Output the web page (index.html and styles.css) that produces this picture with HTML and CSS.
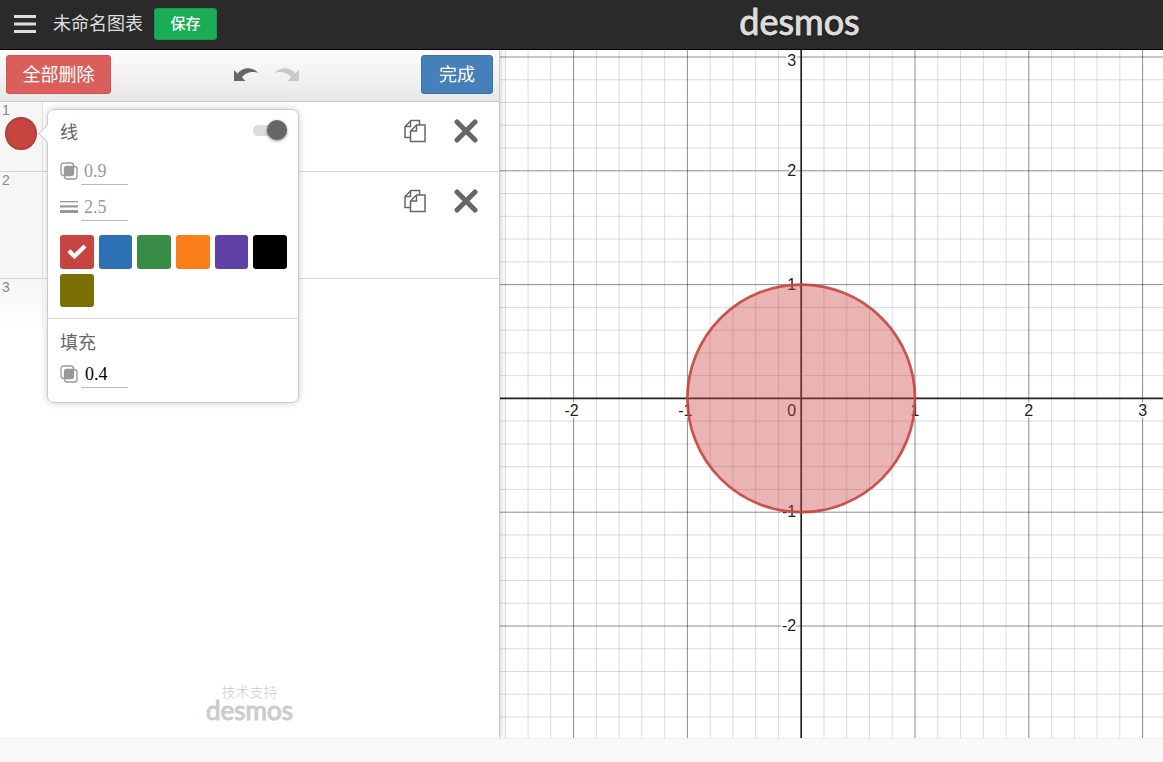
FILE: index.html
```html
<!DOCTYPE html>
<html lang="zh-CN">
<head>
  <meta charset="UTF-8">
  <meta name="viewport" content="width=device-width, initial-scale=1.0">
  <title>Desmos</title>
  <link rel="stylesheet" href="styles.css">
</head>
<body>
  <header class="header">
    <div class="header-left">
      <button type="button" class="menu-button" aria-label="菜单">
        <svg width="22" height="18" viewBox="0 0 22 18"><path d="M0 1.5h22M0 9h22M0 16.5h22" stroke="#ddd" stroke-width="3"/></svg>
      </button>
      <h1 class="title">未命名图表</h1>
      <button type="button" class="btn btn-save">保存</button>
    </div>
    <a href="#" class="logo">desmos</a>
  </header>

  <main class="main">
    <section class="panel">
      <div class="toolbar">
        <button type="button" class="btn btn-delete">全部删除</button>
        <div class="history">
          <button type="button" class="icon-button" aria-label="撤销">
            <svg width="24" height="13" viewBox="0 0 24 13"><path d="M0 2V13H11.5L8 9.5C11 5 17 2.5 24 4.8C19-1.5 9-1.5 3.5 5.5Z" fill="#666"/></svg>
          </button>
          <button type="button" class="icon-button" aria-label="重做" disabled>
            <svg width="24" height="13" viewBox="0 0 24 13"><path d="M24 2V13H12.5L16 9.5C13 5 7 2.5 0 4.8C5-1.5 15-1.5 20.5 5.5Z" fill="#c8c8c8"/></svg>
          </button>
        </div>
        <button type="button" class="btn btn-done">完成</button>
      </div>

      <ol class="expressions">
        <li class="row">
          <div class="gutter">
            <span class="number">1</span>
            <button type="button" class="color-button" aria-label="颜色"></button>
          </div>
          <div class="actions">
            <button type="button" class="icon-button" aria-label="复制">
              <svg width="22" height="24" viewBox="0 0 22 24" fill="none" stroke="#666" stroke-width="1.5"><path d="M6 18.5H1V7.5L7 1.5H15.5V6M1 7.5H6.5V1.5"/><path d="M6.5 22.5V12L12.5 6H21V22.5ZM6.5 12H12.5V6"/></svg>
            </button>
            <button type="button" class="icon-button" aria-label="删除">
              <svg width="24" height="24" viewBox="0 0 24 24"><path d="M3 3L21 21M21 3L3 21" stroke="#666" stroke-width="5"  stroke-linecap="round"/></svg>
            </button>
          </div>
        </li>
        <li class="row row-tall">
          <div class="gutter"><span class="number">2</span></div>
          <div class="actions">
            <button type="button" class="icon-button" aria-label="复制">
              <svg width="22" height="24" viewBox="0 0 22 24" fill="none" stroke="#666" stroke-width="1.5"><path d="M6 18.5H1V7.5L7 1.5H15.5V6M1 7.5H6.5V1.5"/><path d="M6.5 22.5V12L12.5 6H21V22.5ZM6.5 12H12.5V6"/></svg>
            </button>
            <button type="button" class="icon-button" aria-label="删除">
              <svg width="24" height="24" viewBox="0 0 24 24"><path d="M3 3L21 21M21 3L3 21" stroke="#666" stroke-width="5" stroke-linecap="round"/></svg>
            </button>
          </div>
        </li>
        <li class="row row-new">
          <div class="gutter"><span class="number">3</span></div>
        </li>
      </ol>

      <div class="popover">
        <div class="group">
          <div class="group-head">
            <label for="line-on">线</label>
            <input type="checkbox" id="line-on" class="toggle" checked>
          </div>
          <div class="field">
            <label for="line-opacity" aria-label="线不透明度">
              <svg width="18" height="18" viewBox="0 0 18 18"><rect x="1" y="1" width="12.5" height="12.5" rx="2.5" fill="none" stroke="#999" stroke-width="1.3"/><rect x="4.5" y="4.5" width="12.5" height="12.5" rx="2.5" fill="none" stroke="#999" stroke-width="1.3"/><rect x="4.5" y="4.5" width="9" height="9" rx="2" fill="#999"/></svg>
            </label>
            <input type="text" id="line-opacity" value="0.9">
          </div>
          <div class="field">
            <label for="line-width" aria-label="线宽">
              <svg width="18" height="18" viewBox="0 0 18 18" fill="#999"><rect y="3" width="18" height="1.3"/><rect y="7.3" width="18" height="2.2"/><rect y="12" width="18" height="3"/></svg>
            </label>
            <input type="text" id="line-width" value="2.5">
          </div>
          <div class="swatches">
            <button type="button" class="swatch red" aria-label="红色">
              <svg width="20" height="16" viewBox="0 0 20 16"><path d="M1.8 6.8L7.5 12.3L18 2" fill="none" stroke="#fff" stroke-width="4.2"/></svg>
            </button>
            <button type="button" class="swatch blue" aria-label="蓝色"></button>
            <button type="button" class="swatch green" aria-label="绿色"></button>
            <button type="button" class="swatch orange" aria-label="橙色"></button>
            <button type="button" class="swatch purple" aria-label="紫色"></button>
            <button type="button" class="swatch black" aria-label="黑色"></button>
            <button type="button" class="swatch olive" aria-label="橄榄色"></button>
          </div>
        </div>
        <div class="group">
          <div class="group-head"><span>填充</span></div>
          <div class="field field-active">
            <label for="fill-opacity" aria-label="填充不透明度">
              <svg width="18" height="18" viewBox="0 0 18 18"><rect x="1" y="1" width="12.5" height="12.5" rx="2.5" fill="none" stroke="#999" stroke-width="1.3"/><rect x="4.5" y="4.5" width="12.5" height="12.5" rx="2.5" fill="none" stroke="#999" stroke-width="1.3"/><rect x="4.5" y="4.5" width="9" height="9" rx="2" fill="#999"/></svg>
            </label>
            <input type="text" id="fill-opacity" value="0.4">
          </div>
        </div>
      </div>

      <div class="powered">
        <span>技术支持</span>
        <a href="#" class="powered-logo">desmos</a>
      </div>
    </section>

    <section class="graph">
      <svg id="graph" class="graph-svg"></svg>
    </section>
  </main>

  <footer class="footer"></footer>

  <script src="script.js"></script>
</body>
</html>
```
FILE: styles.css
```css
* {
  box-sizing: border-box;
}
body {
  display: flex;
  flex-direction: column;
  min-height: 100vh;
  margin: 0;
  background: #fff;
  font-family: "Liberation Sans", "Noto Sans CJK SC", sans-serif;
}
button {
  padding: 0;
  border: none;
  background: none;
  font-family: inherit;
  cursor: pointer;
}
svg {
  display: block;
}

/* header */
.header {
  display: grid;
  grid-template-columns: 436px 1fr;
  align-items: center;
  height: 50px;
  padding-bottom: 2px;
  background: #2a2a2a;
  border-bottom: 1px solid #000;
}
.header-left {
  display: flex;
  align-items: center;
  padding-left: 14px;
}
.title {
  margin: 0 11px 0 17px;
  color: #ddd;
  font-size: 18px;
  font-weight: 400;
  line-height: 24px;
}
.btn {
  padding-bottom: 3px;
  border-radius: 3px;
  color: #fff;
  font-size: 18px;
}
.btn-save {
  width: 63px;
  height: 32px;
  background: #1aad58;
  border: 1px solid #18994e;
  font-size: 15px;
  font-weight: 500;
}
.logo {
  padding-bottom: 5px;
  color: #ddd;
  font-family: Lato, sans-serif;
  font-size: 36px;
  line-height: 40px;
  text-align: center;
  text-decoration: none;
  text-shadow: 0 1px 2px #000;
  -webkit-text-stroke: 1px #ddd;
}

/* expression panel */
.main {
  display: grid;
  grid-template-columns: 500px 1fr;
  flex: 1;
}
.panel {
  position: relative;
  z-index: 1;
  display: flex;
  flex-direction: column;
  background: #fff;
  border-right: 1px solid #ccc;
  box-shadow: 0 0 6px rgba(0, 0, 0, 0.25);
  clip-path: inset(0 -10px 0 0);
}
.toolbar {
  display: flex;
  align-items: center;
  justify-content: space-between;
  height: 52px;
  padding: 0 6px 2px;
  background: linear-gradient(#fcfcfc, #e8e8e8);
  border-bottom: 1px solid #c8c8c8;
}
.btn-delete {
  width: 105px;
  height: 39px;
  background: #da5f5b;
  border: 1px solid #d05550;
}
.btn-done {
  width: 72px;
  height: 39px;
  background: #4680b9;
  border: 1px solid #3b72a8;
}
.history {
  display: flex;
  gap: 17px;
}
.expressions {
  margin: 0;
  padding: 0;
  list-style: none;
}
.row {
  display: flex;
  justify-content: space-between;
  height: 70px;
  border-bottom: 1px solid #d6d6d6;
}
.row-tall {
  height: 107px;
}
.row-new {
  border-bottom: none;
}
.gutter {
  width: 43px;
  padding-left: 2px;
  background: #f6f6f6;
  border-right: 1px solid #e4e4e4;
}
.row-new .gutter {
  height: 50px;
  background: linear-gradient(#f6f6f6, #fff);
  border-right-color: #f2f2f2;
}
.number {
  display: block;
  padding-top: 1px;
  color: #888;
  font-size: 14px;
  line-height: 14px;
}
.color-button {
  display: block;
  width: 32px;
  height: 33px;
  margin-left: 3px;
  border-radius: 50%;
  background: #c74440;
  box-shadow: inset 0 0 3px rgba(0, 0, 0, 0.35);
}
.actions {
  display: flex;
  align-items: flex-start;
  gap: 28px;
  padding: 17px 21px 0 0;
}

/* style popover, floats over the list */
.popover {
  position: absolute;
  top: 59px;
  left: 47px;
  width: 252px;
  background: #fff;
  border: 1px solid #ccc;
  border-radius: 7px;
  box-shadow: 0 0 7px rgba(0, 0, 0, 0.2);
  color: #666;
  font-size: 18px;
}
.popover::before {
  content: "";
  position: absolute;
  top: 17px;
  left: -7px;
  width: 12px;
  height: 12px;
  background: #fff;
  border: 1px solid #ccc;
  border-width: 0 0 1px 1px;
  transform: rotate(45deg);
}
.group {
  display: flex;
  flex-direction: column;
  gap: 8px;
  padding: 11px 11px 11px 12px;
}
.group + .group {
  gap: 5px;
  padding: 12px 11px 14px 12px;
  border-top: 1px solid #ddd;
}
.group-head {
  display: flex;
  justify-content: space-between;
  line-height: 24px;
}
.group-head + .field {
  margin-top: 4px;
}
.group + .group .field {
  margin-top: 0;
}
.toggle {
  appearance: none;
  width: 34px;
  height: 11px;
  margin: 4px 0 0;
  border-radius: 6px;
  background: #ddd;
}
.toggle::before {
  content: "";
  display: block;
  width: 20px;
  height: 20px;
  margin: -5px 0 0 14px;
  border-radius: 50%;
  background: #666;
  box-shadow: 0 1px 3px rgba(0, 0, 0, 0.5);
}
.field {
  display: flex;
  align-items: center;
  gap: 3px;
  height: 28px;
}
.field input {
  width: 47px;
  height: 28px;
  padding: 2px 3px 0;
  border: none;
  border-bottom: 1px solid #bbb;
  background: none;
  color: #999;
  font-family: "Liberation Serif", serif;
  font-size: 18px;
}
.field-active input {
  padding-left: 4px;
  color: #000;
}
.swatches {
  display: grid;
  grid-template-columns: repeat(6, 1fr);
  gap: 5px;
  margin-top: 6px;
}
.swatch {
  display: flex;
  align-items: center;
  justify-content: center;
  aspect-ratio: 1;
  border-radius: 3px;
}
.red { background: #c74440; }
.blue { background: #2d70b3; }
.green { background: #388c46; }
.orange { background: #fa7e19; }
.purple { background: #6042a6; }
.black { background: #000; }
.olive { background: #7a6f03; }

.powered {
  display: flex;
  flex-direction: column;
  align-items: center;
  margin-top: auto;
  padding-bottom: 18px;
  color: #ccc;
  font-size: 14px;
  font-weight: 300;
  line-height: 16px;
}
.powered-logo {
  color: #ccc;
  font-family: Lato, sans-serif;
  font-size: 26px;
  font-weight: 400;
  line-height: 20px;
  text-decoration: none;
  -webkit-text-stroke: 1px #ccc;
}

/* graph paper */
.graph {
  min-width: 0;
}
.graph-svg {
  width: 100%;
  height: 100%;
}
.minor { stroke: #000; stroke-opacity: 0.14; }
.major { stroke: #000; stroke-opacity: 0.45; }
.axis { stroke: #222; stroke-width: 1.7; }
.label {
  fill: #222;
  stroke: #fff;
  stroke-width: 3px;
  paint-order: stroke;
  font-size: 16px;
}
.circle {
  fill: #c74440;
  fill-opacity: 0.4;
  stroke: #c74440;
  stroke-opacity: 0.9;
  stroke-width: 2.7;
}

.footer {
  height: 24px;
  background: #f9f9f9;
  border-top: 1px solid #eee;
}
```
FILE: script.js
```javascript
const svg = document.getElementById("graph");
const unit = 113.8;
const originX = 301.2;
const originY = 348.4;

function add(tag, attrs, text) {
  const el = document.createElementNS("http://www.w3.org/2000/svg", tag);
  for (const key in attrs) {
    el.setAttribute(key, attrs[key]);
  }
  if (text !== undefined) {
    el.textContent = text;
  }
  svg.appendChild(el);
}

function drawLines(width, height, wantMajor) {
  const step = unit / 5;
  for (let i = Math.ceil(-originX / step); originX + i * step < width; i++) {
    if (i !== 0 && (i % 5 === 0) === wantMajor) {
      const x = originX + i * step;
      add("line", { class: wantMajor ? "major" : "minor", x1: x, x2: x, y1: 0, y2: height });
    }
  }
  for (let i = Math.ceil(-originY / step); originY + i * step < height; i++) {
    if (i !== 0 && (i % 5 === 0) === wantMajor) {
      const y = originY + i * step;
      add("line", { class: wantMajor ? "major" : "minor", x1: 0, x2: width, y1: y, y2: y });
    }
  }
}

function draw() {
  const width = svg.clientWidth;
  const height = svg.clientHeight;
  svg.innerHTML = "";

  drawLines(width, height, false);
  drawLines(width, height, true);
  add("line", { class: "axis", x1: 0, x2: width, y1: originY, y2: originY });
  add("line", { class: "axis", x1: originX, x2: originX, y1: 0, y2: height });

  for (let n = Math.ceil(-originX / unit); originX + n * unit < width; n++) {
    if (n !== 0) {
      // the minus sign pulls the label a little to the left
      const x = originX + n * unit - (n < 0 ? 2 : 0);
      add("text", { class: "label", x: x, y: originY + 18, "text-anchor": "middle" }, n);
    }
  }
  for (let n = Math.ceil((originY - height) / unit); originY - n * unit > 0; n++) {
    // keep labels near the edge inside the paper
    const y = Math.max(originY - n * unit + 5, 16);
    add("text", { class: "label", x: originX - 5, y: n === 0 ? originY + 18 : y, "text-anchor": "end" }, n);
  }

  add("circle", { class: "circle", cx: originX, cy: originY, r: unit });
}

draw();
window.addEventListener("resize", draw);
```
